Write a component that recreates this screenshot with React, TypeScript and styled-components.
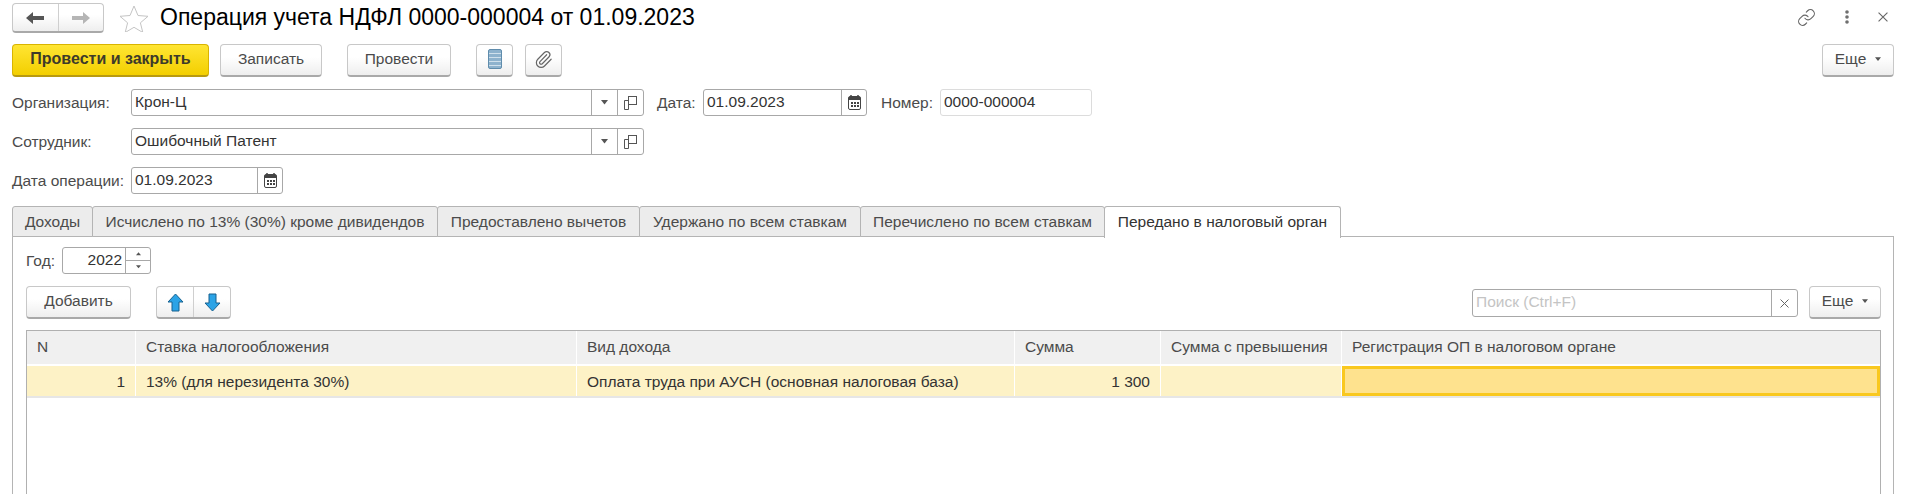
import { createGlobalStyle, styled } from "styled-components";
import { Link, Paperclip } from "lucide-react";

const GlobalStyle = createGlobalStyle`
  html, body {
    margin: 0;
    height: 100%;
    background: #fff;
    overflow: hidden;
  }
  #root {
    height: 100%;
  }
  * {
    box-sizing: border-box;
  }
`;

const Page = styled.div`
  display: flex;
  flex-direction: column;
  height: 494px;
  overflow: hidden;
  font-family: "Liberation Sans", Arial, sans-serif;
  font-size: 15.5px;
  color: #4b4b4b;
`;

const TitleBar = styled.div`
  display: flex;
  align-items: flex-start;
  height: 44px;
  padding: 3px 0 0 12px;
`;

const ButtonGroup = styled.div<{ $w: number; $h?: number; $ml?: number }>`
  display: flex;
  flex: none;
  width: ${(p) => p.$w}px;
  height: ${(p) => p.$h ?? 30}px;
  margin-left: ${(p) => p.$ml ?? 0}px;
  border: 1px solid #c8c8c8;
  border-bottom: 2px solid #a9a9a9;
  border-radius: 4px;
  background: linear-gradient(#fff 40%, #eeeeee);
  overflow: hidden;
`;

const GroupCell = styled.div`
  flex: 1;
  display: flex;
  align-items: center;
  justify-content: center;
  & + & {
    border-left: 1px solid #cfcfcf;
  }
`;

const StarWrap = styled.div`
  display: flex;
  margin: 2px 0 0 15px;
`;

const Title = styled.h1`
  margin: 0 0 0 11px;
  font-size: 23px;
  font-weight: 400;
  line-height: 29px;
  color: #000;
  white-space: nowrap;
`;

const TitleIcons = styled.div`
  margin-left: auto;
  display: flex;
  align-items: center;
  height: 28px;
  padding-right: 17px;
  gap: 29px;
`;

const CommandBar = styled.div`
  display: flex;
  align-items: stretch;
  height: 33px;
  padding: 0 11px 0 12px;
`;

const Button = styled.button<{ $w: number; $ml?: number; $right?: boolean }>`
  display: flex;
  align-items: center;
  justify-content: center;
  gap: 9px;
  width: ${(p) => p.$w}px;
  height: 33px;
  flex: none;
  margin-left: ${(p) => (p.$right ? "auto" : `${p.$ml ?? 0}px`)};
  padding: 0 0 2px;
  font: inherit;
  color: #4b4b4b;
  background: linear-gradient(#fff 40%, #eeeeee);
  border: 1px solid #c8c8c8;
  border-bottom: 2px solid #a9a9a9;
  border-radius: 4px;
`;

const PrimaryButton = styled(Button)`
  font-size: 16px;
  font-weight: 700;
  color: #3d3a2a;
  background: linear-gradient(#ffe533, #f3cf00);
  border-color: #d9b400;
  border-bottom-color: #b89a10;
`;

const FieldRow = styled.div`
  display: flex;
  align-items: center;
  height: 27px;
  margin-top: 12px;
  padding-left: 12px;
`;

const Label = styled.span<{ $w?: number; $ml?: number }>`
  flex: none;
  width: ${(p) => (p.$w ? `${p.$w}px` : "auto")};
  margin-left: ${(p) => p.$ml ?? 0}px;
  white-space: nowrap;
`;

const Field = styled.div<{ $w: number; $light?: boolean }>`
  display: flex;
  flex: none;
  width: ${(p) => p.$w}px;
  height: 27px;
  background: #fff;
  border: 1px solid ${(p) => (p.$light ? "#dcdcdc" : "#a8a8a8")};
  border-radius: 3px;
  overflow: hidden;
`;

const FieldValue = styled.div<{ $right?: boolean; $muted?: boolean }>`
  flex: 1;
  min-width: 0;
  padding: 0 ${(p) => (p.$right ? 3 : 0)}px 0 3px;
  line-height: 24px;
  text-align: ${(p) => (p.$right ? "right" : "left")};
  color: ${(p) => (p.$muted ? "#c4c4c4" : "#333")};
  white-space: nowrap;
`;

const FieldButton = styled.div<{ $w: number }>`
  flex: none;
  display: flex;
  align-items: center;
  justify-content: center;
  width: ${(p) => p.$w}px;
  border-left: 1px solid #a8a8a8;
`;

const SpinColumn = styled.div`
  flex: none;
  display: flex;
  flex-direction: column;
  width: 25px;
  border-left: 1px solid #a8a8a8;
`;

const SpinCell = styled.div`
  flex: 1;
  display: flex;
  align-items: center;
  justify-content: center;
  & + & {
    border-top: 1px solid #a8a8a8;
  }
`;

const TabStrip = styled.div`
  display: flex;
  height: 31px;
  margin-top: 12px;
  padding-left: 12px;
`;

const Tab = styled.div<{ $w: number; $active?: boolean }>`
  flex: none;
  width: ${(p) => p.$w}px;
  height: ${(p) => (p.$active ? 32 : 31)}px;
  position: relative;
  z-index: ${(p) => (p.$active ? 1 : 0)};
  padding-top: 6px;
  text-align: center;
  white-space: nowrap;
  color: ${(p) => (p.$active ? "#333" : "#4b4b4b")};
  background: ${(p) => (p.$active ? "#fff" : "#ececec")};
  border: 1px solid #b4b4b4;
  border-bottom: ${(p) => (p.$active ? "0" : "1px solid #b4b4b4")};
  border-radius: 3px 3px 0 0;
  & + & {
    margin-left: -1px;
  }
`;

const Panel = styled.div`
  flex: 1;
  min-height: 0;
  display: flex;
  flex-direction: column;
  margin: -1px 11px 0 12px;
  padding: 10px 12px 0 13px;
  border: 1px solid #b4b4b4;
  border-bottom: 0;
`;

const YearRow = styled.div`
  display: flex;
  align-items: center;
  height: 27px;
`;

const TableBar = styled.div`
  display: flex;
  align-items: flex-start;
  height: 33px;
  margin-top: 12px;
`;

const SearchField = styled(Field)`
  margin: 3px 0 0 auto;
  height: 28px;
`;

const Table = styled.div`
  flex: 1;
  min-height: 0;
  margin-top: 11px;
  border: 1px solid #b0b0b0;
  border-bottom: 0;
`;

const TableRow = styled.div<{ $head?: boolean }>`
  display: grid;
  grid-template-columns: 108px 441px 438px 146px 181px 1fr;
  height: ${(p) => (p.$head ? 35 : 32)}px;
  background: ${(p) => (p.$head ? "#f0f0f0" : "#fdf2c6")};
  border-bottom: ${(p) => (p.$head ? "2px solid #fff" : "2px solid #e6e6e6")};
`;

const HeadCell = styled.div`
  padding: 7px 0 0 10px;
  border-left: 1px solid #fff;
  white-space: nowrap;
  &:first-child {
    border-left: 0;
  }
`;

const Cell = styled.div<{ $right?: boolean; $current?: boolean }>`
  padding: ${(p) => (p.$right ? "7px 10px 0 0" : "7px 0 0 10px")};
  text-align: ${(p) => (p.$right ? "right" : "left")};
  color: #333;
  white-space: nowrap;
  border-left: 1px solid #fff;
  background: ${(p) => (p.$current ? "#fee28e" : "transparent")};
  box-shadow: ${(p) => (p.$current ? "inset 0 0 0 3px #f9c81f" : "none")};
  &:first-child {
    border-left: 0;
  }
`;

const Arrow = ({ dir, color }: { dir: "left" | "right"; color: string }) => (
  <svg width="20" height="14" viewBox="0 0 20 14">
    <path
      d={dir === "left" ? "M1 7 8 1v4h11v4H8v4z" : "M19 7 12 1v4H1v4h11v4z"}
      fill={color}
    />
  </svg>
);

const Star = () => (
  <svg width="30" height="27" viewBox="0 0 30 27">
    <path
      d="M15 1l4 9.5 10 .8-7.600 6.500 2.400 9.700L15 22.300l-8.800 5.200 2.400-9.700L1 11.300l10-.8z"
      fill="#fff"
      stroke="#c4c4c4"
      strokeWidth="1"
    />
  </svg>
);

const ListIcon = () => (
  <svg width="14" height="20" viewBox="0 0 14 20">
    <rect x="0.500" y="0.500" width="13" height="19" rx="1.500" fill="#8db2cd" stroke="#5f8cac" />
    <path d="M1 4.500h12M1 8.500h12M1 12.500h12M1 16.500h12" stroke="#cfe0ec" strokeWidth="1" />
  </svg>
);

const Triangle = ({ size = 7, down = true, color = "#555" }: { size?: number; down?: boolean; color?: string }) => (
  <svg width={size} height={size / 2 + 1} viewBox="0 0 8 5">
    <path d={down ? "M0 0h8L4 5z" : "M0 5h8L4 0z"} fill={color} />
  </svg>
);

const OpenIcon = () => (
  <svg width="13" height="14" viewBox="0 0 13 14" fill="none" stroke="#555">
    <rect x="4.500" y="0.500" width="8" height="8" fill="#fff" />
    <path d="M4.500 4.500H0.500v9h4v-5" />
  </svg>
);

const CalendarIcon = () => (
  <svg width="13" height="15" viewBox="0 0 13 15">
    <rect x="0.500" y="1.500" width="12" height="13" rx="1.500" fill="#fff" stroke="#444" />
    <rect x="1" y="2" width="11" height="3" fill="#444" />
    <path d="M3 0v3M10 0v3" stroke="#444" strokeWidth="1.500" />
    <path d="M3 7h2v2H3zM6 7h2v2H6zM9 7h2v2H9zM3 10h2v2H3zM6 10h2v2H6zM9 10h2v2H9z" fill="#444" />
  </svg>
);

const BlueArrow = ({ up }: { up?: boolean }) => (
  <svg width="17" height="19" viewBox="0 0 17 19">
    <path
      d={up ? "M8.500 1 16 9h-4v9H5V9H1z" : "M8.500 18 16 10h-4V1H5v9H1z"}
      fill="#2ba3e6"
      stroke="#17618f"
    />
  </svg>
);

const MoreDots = () => (
  <svg width="4" height="14" viewBox="0 0 4 14" fill="#6f6f6f">
    <circle cx="2" cy="2" r="1.800" />
    <circle cx="2" cy="7" r="1.800" />
    <circle cx="2" cy="12" r="1.800" />
  </svg>
);

const Cross = ({ size = 9 }: { size?: number }) => (
  <svg width={size} height={size} viewBox="0 0 9 9" stroke="#666" strokeWidth="1">
    <path d="M0.500 0.500l8 8M8.500 0.500l-8 8" />
  </svg>
);

const tabs = [
  { title: "Доходы", w: 81 },
  { title: "Исчислено по 13% (30%) кроме дивидендов", w: 346 },
  { title: "Предоставлено вычетов", w: 203 },
  { title: "Удержано по всем ставкам", w: 222 },
  { title: "Перечислено по всем ставкам", w: 245 },
  { title: "Передано в налоговый орган", w: 237, active: true },
];

export default function App() {
  return (
    <Page>
      <GlobalStyle />
      <TitleBar>
        <ButtonGroup $w={92}>
          <GroupCell><Arrow dir="left" color="#555" /></GroupCell>
          <GroupCell><Arrow dir="right" color="#b5b5b5" /></GroupCell>
        </ButtonGroup>
        <StarWrap><Star /></StarWrap>
        <Title>Операция учета НДФЛ 0000-000004 от 01.09.2023</Title>
        <TitleIcons>
          <Link size={19} color="#666" strokeWidth={1.400} />
          <MoreDots />
          <Cross size={10} />
        </TitleIcons>
      </TitleBar>

      <CommandBar>
        <PrimaryButton $w={197}>Провести и закрыть</PrimaryButton>
        <Button $w={102} $ml={11}>Записать</Button>
        <Button $w={104} $ml={25}>Провести</Button>
        <Button $w={37} $ml={25}><ListIcon /></Button>
        <Button $w={37} $ml={12}>
          <Paperclip size={19} color="#666" strokeWidth={1.500} />
        </Button>
        <Button $w={72} $right>Еще <Triangle size={6} /></Button>
      </CommandBar>

      <FieldRow>
        <Label $w={119}>Организация:</Label>
        <Field $w={513}>
          <FieldValue>Крон-Ц</FieldValue>
          <FieldButton $w={26}><Triangle /></FieldButton>
          <FieldButton $w={26}><OpenIcon /></FieldButton>
        </Field>
        <Label $ml={13} $w={46}>Дата:</Label>
        <Field $w={164}>
          <FieldValue>01.09.2023</FieldValue>
          <FieldButton $w={25}><CalendarIcon /></FieldButton>
        </Field>
        <Label $ml={14} $w={59}>Номер:</Label>
        <Field $w={152} $light>
          <FieldValue>0000-000004</FieldValue>
        </Field>
      </FieldRow>

      <FieldRow>
        <Label $w={119}>Сотрудник:</Label>
        <Field $w={513}>
          <FieldValue>Ошибочный Патент</FieldValue>
          <FieldButton $w={26}><Triangle /></FieldButton>
          <FieldButton $w={26}><OpenIcon /></FieldButton>
        </Field>
      </FieldRow>

      <FieldRow>
        <Label $w={119}>Дата операции:</Label>
        <Field $w={152}>
          <FieldValue>01.09.2023</FieldValue>
          <FieldButton $w={25}><CalendarIcon /></FieldButton>
        </Field>
      </FieldRow>

      <TabStrip>
        {tabs.map((t) => (
          <Tab key={t.title} $w={t.w} $active={t.active}>{t.title}</Tab>
        ))}
      </TabStrip>

      <Panel>
        <YearRow>
          <Label $w={36}>Год:</Label>
          <Field $w={89}>
            <FieldValue $right>2022</FieldValue>
            <SpinColumn>
              <SpinCell><Triangle size={5} down={false} /></SpinCell>
              <SpinCell><Triangle size={5} /></SpinCell>
            </SpinColumn>
          </Field>
        </YearRow>

        <TableBar>
          <Button $w={105}>Добавить</Button>
          <ButtonGroup $w={75} $h={33} $ml={25}>
            <GroupCell><BlueArrow up /></GroupCell>
            <GroupCell><BlueArrow /></GroupCell>
          </ButtonGroup>
          <SearchField $w={326}>
            <FieldValue $muted>Поиск (Ctrl+F)</FieldValue>
            <FieldButton $w={26}><Cross /></FieldButton>
          </SearchField>
          <Button $w={72} $ml={11}>Еще <Triangle size={6} /></Button>
        </TableBar>

        <Table>
          <TableRow $head>
            <HeadCell>N</HeadCell>
            <HeadCell>Ставка налогообложения</HeadCell>
            <HeadCell>Вид дохода</HeadCell>
            <HeadCell>Сумма</HeadCell>
            <HeadCell>Сумма с превышения</HeadCell>
            <HeadCell>Регистрация ОП в налоговом органе</HeadCell>
          </TableRow>
          <TableRow>
            <Cell $right>1</Cell>
            <Cell>13% (для нерезидента 30%)</Cell>
            <Cell>Оплата труда при АУСН (основная налоговая база)</Cell>
            <Cell $right>1 300</Cell>
            <Cell />
            <Cell $current />
          </TableRow>
        </Table>
      </Panel>
    </Page>
  );
}
